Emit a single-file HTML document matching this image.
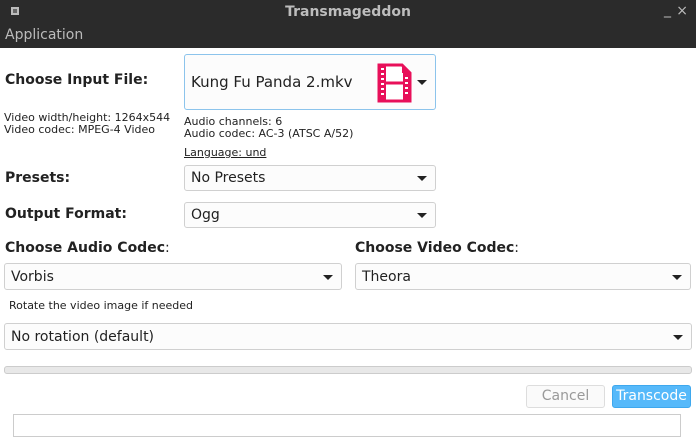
<!DOCTYPE html>
<html><head><meta charset="utf-8"><style>
*{box-sizing:border-box;margin:0;padding:0}
body{width:696px;height:445px;background:#fff;font-family:"DejaVu Sans","Liberation Sans",sans-serif;color:#222;position:relative;overflow:hidden}
.a{position:absolute;white-space:nowrap}
.tb{left:0;top:0;width:696px;height:24px;background:#2b2b2b}
.mb{left:0;top:24px;width:696px;height:24px;background:#2b2b2b;color:#bbb;font-size:14px;padding:3px 5px}
.title{left:0;width:696px;top:4px;text-align:center;color:#bdbdbd;font-weight:bold;font-size:14px}
.cb{border:1px solid #d0d0d0;border-radius:3px;background:#fcfcfc;font-size:14px;padding-left:6px;display:flex;align-items:center}
.cb:after{content:"";position:absolute;right:8px;top:50%;margin-top:-2px;border-left:5px solid transparent;border-right:5px solid transparent;border-top:5px solid #222}
.b{font-weight:bold;font-size:14px}
.s{font-size:11px;line-height:12px}
</style></head><body>
<div class="a tb"></div>
<div class="a" style="left:11px;top:7px;width:8px;height:8px;border:2px solid #bbb;background:#666"></div>
<div class="a title">Transmageddon</div>
<div class="a" style="right:25px;top:2px;color:#bbb;font-size:14px">_</div>
<div class="a" style="right:8px;top:3px;color:#bbb;font-size:14px">×</div>
<div class="a mb">Application</div>

<div class="a b" style="left:5px;top:72px">Choose Input File:</div>
<div class="a cb" style="left:184px;top:54px;width:252px;height:56px;border-color:#8cc4ec;font-size:15px">Kung Fu Panda 2.mkv
<svg style="position:absolute;left:192px;top:8px" width="35" height="40" viewBox="0 0 35 40"><path d="M2 2H25L33 10V38H2Z" fill="#fff" stroke="#e8105a" stroke-width="3"/><path d="M25 2V10H33Z" fill="#e8105a"/><rect x="2" y="2" width="7" height="36" fill="#e8105a"/><rect x="26" y="10" width="7" height="28" fill="#e8105a"/><path d="M9 20H26" stroke="#e8105a" stroke-width="3"/>
<g fill="#fff"><rect x="4" y="5" width="3" height="2"/><rect x="4" y="10" width="3" height="2"/><rect x="4" y="15" width="3" height="2"/><rect x="4" y="20" width="3" height="2"/><rect x="4" y="25" width="3" height="2"/><rect x="4" y="30" width="3" height="2"/><rect x="28" y="14" width="3" height="2"/><rect x="28" y="19" width="3" height="2"/><rect x="28" y="24" width="3" height="2"/><rect x="28" y="29" width="3" height="2"/></g></svg></div>

<div class="a s" style="left:4px;top:112px">Video width/height: 1264x544<br>Video codec: MPEG-4 Video</div>
<div class="a s" style="left:184px;top:116px">Audio channels: 6<br>Audio codec: AC-3 (ATSC A/52)</div>
<div class="a s" style="left:184px;top:147px;text-decoration:underline">Language: und</div>

<div class="a b" style="left:5px;top:170px">Presets:</div>
<div class="a cb" style="left:184px;top:165px;width:252px;height:26px">No Presets</div>
<div class="a b" style="left:5px;top:206px">Output Format:</div>
<div class="a cb" style="left:184px;top:202px;width:252px;height:26px">Ogg</div>

<div class="a b" style="left:5px;top:240px">Choose Audio Codec<span style="font-weight:normal">:</span></div>
<div class="a cb" style="left:4px;top:263px;width:338px;height:27px">Vorbis</div>
<div class="a b" style="left:355px;top:240px">Choose Video Codec<span style="font-weight:normal">:</span></div>
<div class="a cb" style="left:355px;top:263px;width:336px;height:27px">Theora</div>

<div class="a s" style="left:9px;top:300px">Rotate the video image if needed</div>
<div class="a cb" style="left:4px;top:323px;width:688px;height:27px">No rotation (default)</div>

<div class="a" style="left:4px;top:366px;width:688px;height:8px;border:1px solid #ccc;border-radius:3px;background:#e8e8e8"></div>

<div class="a" style="left:526px;top:385px;width:79px;height:23px;border:1px solid #ddd;border-radius:3px;background:#fafafa;color:#999;font-size:14px;text-align:center;line-height:21px">Cancel</div>
<div class="a" style="left:612px;top:385px;width:79px;height:23px;border:1px solid #3ea8ee;border-radius:3px;background:#56b9fa;color:#fff;font-size:14px;text-align:center;line-height:21px">Transcode</div>

<div class="a" style="left:13px;top:414px;width:668px;height:23px;border:1px solid #ccc;background:#fff"></div>
</body></html>
